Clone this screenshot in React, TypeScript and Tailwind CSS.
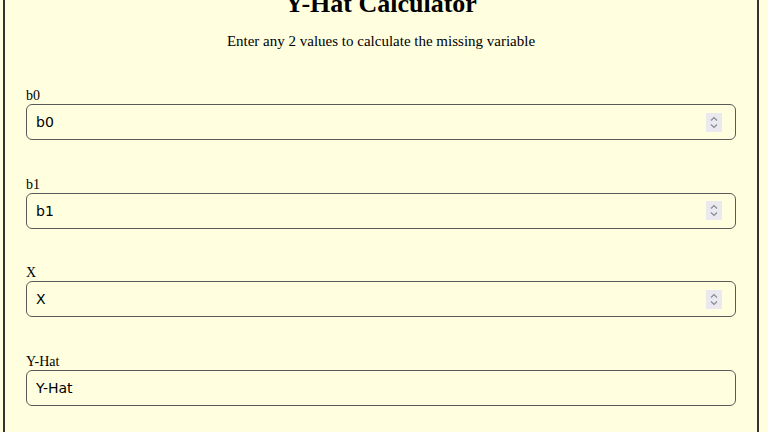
import React from "react";

const serif = { fontFamily: '"Liberation Serif", "Times New Roman", serif' };

function Spinner() {
  return (
    <div className="flex h-[19px] w-[16px] items-center justify-center bg-[#e9e9ef]">
      <svg width="10" height="15" viewBox="0 0 10 15" fill="none" stroke="#8a8a95" strokeWidth="1.2">
        <path d="M2 5.5 L5 2.5 L8 5.5" />
        <path d="M2 9.5 L5 12.5 L8 9.5" />
      </svg>
    </div>
  );
}

function Field({ label, spinner = true }: { label: string; spinner?: boolean }) {
  return (
    <div className="flex flex-col">
      <label className="text-[14px] leading-[16px] text-black" style={serif}>
        {label}
      </label>
      <div className="flex h-[36px] items-center rounded-[6px] border border-[#5a5a5a] bg-[#ffffe0] pl-[9px] pr-[13px]">
        <input
          className="h-full flex-1 bg-transparent text-[14px] text-black outline-none placeholder:text-black"
          style={{ fontFamily: 'Tahoma, "DejaVu Sans", Verdana, sans-serif' }}
          placeholder={label}
          readOnly
        />
        {spinner && <Spinner />}
      </div>
    </div>
  );
}

export default function App() {
  return (
    <div className="min-h-[432px] w-full bg-[#ffffe0] pl-[3px] pr-[9px]">
      <div className="-mt-[11px] border-x-2 border-[#333] px-[21px] pb-[40px]">
        <h1 className="text-center text-[26px] font-bold leading-[30px] text-black" style={serif}>
          Y-Hat Calculator
        </h1>
        <p className="mt-[13px] text-center text-[15px] leading-[18px] text-black" style={serif}>
          Enter any 2 values to calculate the missing variable
        </p>
        <div className="mt-[38px] flex flex-col gap-[36.7px]">
          <Field label="b0" />
          <Field label="b1" />
          <Field label="X" />
          <Field label="Y-Hat" spinner={false} />
        </div>
      </div>
    </div>
  );
}
